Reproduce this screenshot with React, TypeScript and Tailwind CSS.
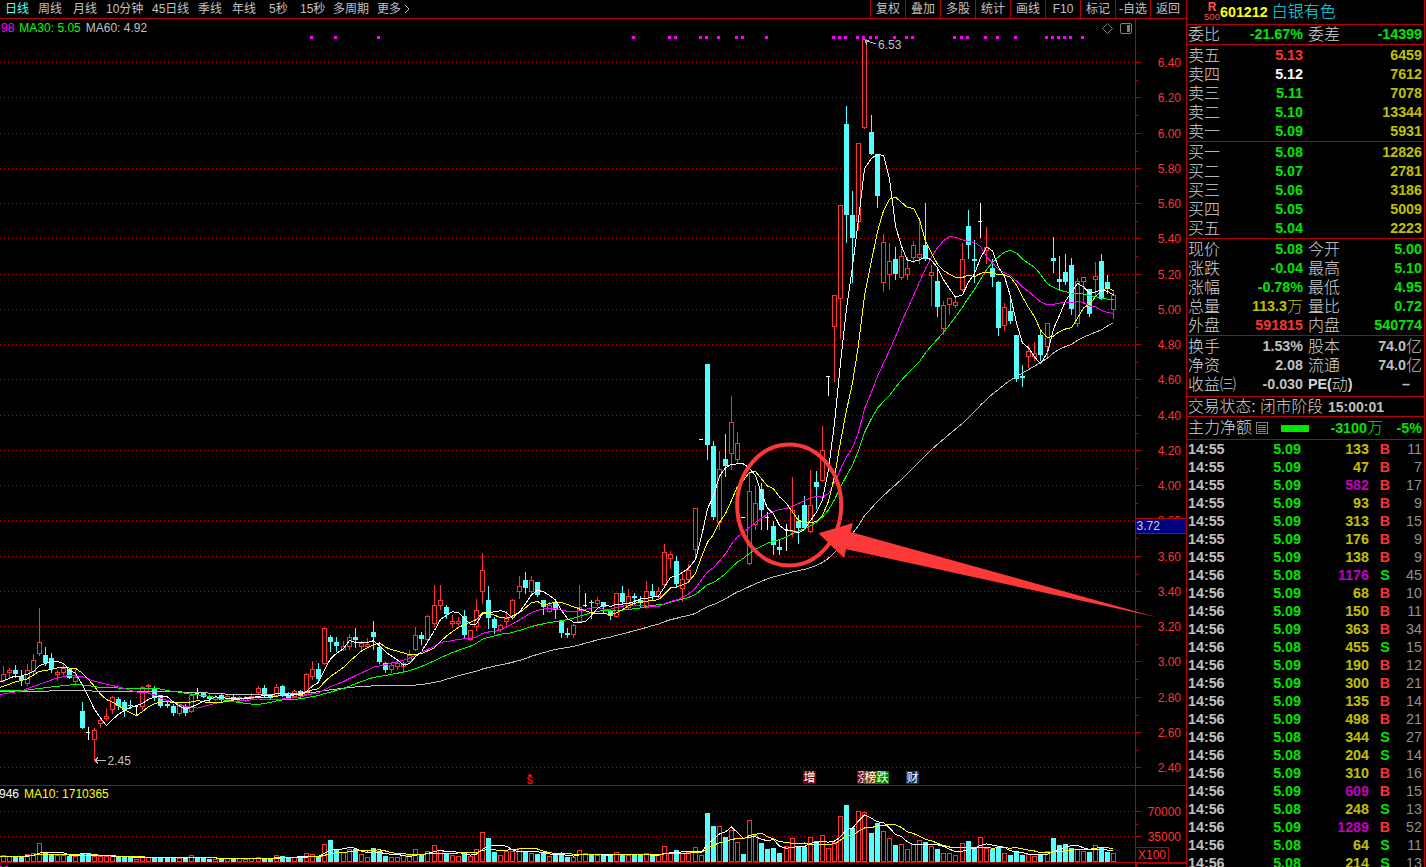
import { clsx } from "clsx";

// [kind, high, top, bottom, low, volumeTop], all on the chart's y scale.
// r = up (hollow), c = down (filled), w = flat day on up volume, c0 = flat day on down volume
type Candle = [string, number, number, number, number, number];

const candles: Candle[] = [
  ["r", 666, 674, 680, 682, 855], ["r", 668, 670, 672, 677, 856], ["c", 665, 670, 674, 677, 856],
  ["c", 670, 676, 680, 685, 857], ["r", 664, 670, 683, 685, 854], ["r", 654, 660, 671, 674, 853],
  ["r", 608, 642, 653, 655, 843], ["c", 647, 655, 663, 665, 853], ["c", 653, 658, 669, 672, 855],
  ["r", 670, 672, 674, 680, 855], ["r", 663, 668, 672, 674, 855], ["c", 668, 669, 678, 678, 856],
  ["r", 670, 677, 681, 683, 856], ["c", 702, 711, 728, 728, 854], ["c0", 727, 732, 732, 739, 854],
  ["r", 728, 730, 739, 760, 856], ["r", 717, 720, 723, 727, 856], ["r", 708, 716, 718, 720, 856],
  ["r", 696, 697, 709, 713, 856], ["c", 697, 699, 706, 709, 857], ["c", 700, 702, 710, 716, 856],
  ["c", 700, 705, 706, 708, 857], ["w", 705, 706, 706, 715, 859], ["r", 686, 687, 706, 709, 857],
  ["r", 684, 685, 686, 692, 857], ["c", 686, 688, 698, 700, 857], ["c", 695, 695, 706, 707, 857],
  ["c", 700, 704, 706, 707, 857], ["c", 704, 706, 713, 715, 858], ["r", 704, 705, 713, 715, 858],
  ["c", 704, 706, 713, 715, 858], ["r", 693, 695, 711, 712, 855], ["c0", 688, 693, 693, 698, 857],
  ["c", 692, 693, 697, 697, 857], ["c", 695, 696, 699, 702, 859], ["r", 695, 697, 699, 700, 859],
  ["c", 694, 695, 700, 701, 858], ["r", 694, 696, 699, 700, 858], ["c", 694, 697, 700, 701, 858],
  ["r", 696, 697, 700, 701, 858], ["r", 696, 698, 700, 701, 859], ["r", 693, 696, 698, 699, 858],
  ["r", 686, 688, 692, 694, 857], ["c", 685, 688, 696, 697, 858], ["c", 694, 695, 698, 699, 858],
  ["r", 684, 687, 695, 696, 855], ["c", 685, 686, 695, 696, 856], ["c", 692, 696, 698, 699, 857],
  ["r", 690, 691, 696, 697, 857], ["c", 690, 691, 696, 697, 857], ["r", 673, 674, 694, 695, 853],
  ["r", 661, 669, 676, 679, 854], ["c", 663, 669, 679, 682, 857], ["r", 628, 628, 663, 664, 844],
  ["c", 635, 637, 642, 651, 840], ["c", 637, 642, 646, 651, 849], ["r", 641, 646, 649, 650, 852],
  ["r", 634, 637, 646, 649, 849], ["c", 628, 637, 640, 647, 849], ["r", 641, 643, 646, 649, 854],
  ["r", 638, 644, 646, 647, 857], ["c", 621, 632, 637, 649, 848], ["c", 644, 647, 662, 663, 851],
  ["c", 662, 663, 670, 672, 856], ["r", 663, 665, 669, 672, 857], ["r", 662, 663, 666, 669, 857],
  ["r", 662, 663, 666, 670, 855], ["r", 650, 655, 661, 662, 855], ["r", 627, 635, 649, 650, 849],
  ["c", 632, 635, 639, 644, 855], ["r", 615, 616, 639, 640, 851], ["r", 585, 605, 623, 626, 845],
  ["r", 585, 600, 605, 609, 850], ["c", 605, 607, 614, 618, 854], ["r", 615, 621, 623, 627, 855],
  ["r", 617, 621, 623, 625, 856], ["c", 610, 616, 635, 637, 852], ["r", 630, 630, 639, 640, 856],
  ["r", 599, 610, 626, 630, 849], ["r", 553, 570, 591, 603, 832], ["c", 586, 600, 618, 628, 838],
  ["c", 617, 619, 628, 633, 852], ["r", 624, 625, 629, 631, 855], ["r", 611, 618, 621, 625, 851],
  ["r", 599, 600, 617, 619, 851], ["r", 576, 586, 591, 598, 848], ["c", 572, 580, 588, 593, 851],
  ["r", 576, 580, 591, 594, 853], ["c", 582, 582, 595, 596, 854], ["c", 600, 600, 607, 614, 853],
  ["r", 602, 605, 611, 612, 856], ["c", 602, 603, 610, 618, 855], ["c", 620, 621, 633, 637, 853],
  ["c", 628, 633, 635, 637, 857], ["r", 624, 625, 634, 637, 857], ["r", 585, 607, 621, 622, 850],
  ["w", 593, 605, 605, 606, 853], ["c", 600, 602, 602, 618, 855], ["r", 597, 600, 603, 605, 855],
  ["c", 602, 602, 607, 613, 855], ["c", 609, 610, 616, 619, 855], ["r", 593, 593, 616, 617, 852],
  ["c", 586, 593, 602, 604, 854], ["r", 589, 596, 607, 609, 855], ["c", 593, 596, 598, 603, 855],
  ["c", 596, 600, 602, 607, 855], ["r", 581, 591, 607, 608, 853], ["c", 584, 591, 596, 600, 855],
  ["r", 587, 591, 596, 598, 855], ["r", 544, 552, 584, 586, 846], ["r", 551, 554, 558, 568, 853],
  ["c", 556, 561, 584, 586, 850], ["r", 574, 579, 588, 601, 853], ["r", 564, 570, 579, 581, 852],
  ["r", 508, 508, 549, 558, 847], ["w", 439, 439, 439, 439, 855], ["c", 364, 364, 445, 459, 813],
  ["c", 441, 446, 517, 519, 826], ["r", 451, 469, 522, 529, 826], ["c", 434, 459, 466, 476, 837],
  ["r", 396, 422, 453, 469, 830], ["r", 432, 443, 459, 463, 842], ["c0", 517, 517, 517, 517, 854],
  ["r", 472, 491, 563, 564, 820], ["r", 486, 503, 524, 529, 835], ["c", 483, 489, 510, 529, 843],
  ["c0", 512, 517, 517, 529, 849], ["c", 521, 526, 545, 554, 848], ["c", 539, 547, 550, 554, 853],
  ["w", 524, 529, 529, 550, 846], ["r", 477, 510, 531, 536, 838], ["c", 515, 521, 528, 543, 846],
  ["c", 496, 505, 528, 529, 847], ["r", 470, 505, 531, 532, 837], ["c", 471, 482, 487, 508, 841],
  ["r", 426, 450, 480, 481, 835], ["w", 376, 376, 376, 395, 848], ["r", 295, 295, 326, 381, 842],
  ["r", 205, 205, 298, 338, 816], ["c", 106, 124, 215, 242, 805], ["c", 191, 215, 238, 282, 828],
  ["r", 143, 143, 221, 229, 811], ["r", 38, 39, 127, 128, 812], ["c", 115, 132, 154, 154, 833],
  ["c", 154, 154, 196, 207, 823], ["r", 234, 242, 282, 291, 831], ["r", 243, 261, 274, 289, 838],
  ["c", 247, 259, 274, 279, 845], ["r", 249, 256, 277, 279, 844], ["r", 257, 268, 274, 279, 849],
  ["r", 241, 245, 257, 262, 844], ["r", 218, 254, 257, 263, 840], ["c", 203, 245, 259, 260, 842],
  ["r", 265, 272, 275, 305, 846], ["c", 268, 281, 307, 316, 849], ["r", 301, 305, 328, 334, 853],
  ["r", 298, 298, 304, 314, 853], ["r", 296, 302, 305, 307, 855], ["r", 243, 259, 289, 290, 843],
  ["c", 210, 226, 245, 258, 841], ["c", 240, 259, 261, 282, 848], ["w", 203, 221, 221, 237, 837],
  ["r", 227, 247, 250, 263, 848], ["c", 259, 268, 277, 286, 849], ["c", 281, 282, 328, 335, 847],
  ["r", 303, 307, 325, 330, 853], ["c", 295, 311, 321, 323, 855], ["c", 335, 335, 379, 381, 851],
  ["c", 365, 376, 378, 386, 855], ["r", 345, 351, 356, 367, 854], ["r", 342, 353, 356, 360, 856],
  ["c", 330, 335, 355, 360, 854], ["r", 323, 323, 346, 358, 851], ["c", 237, 258, 261, 272, 838],
  ["c", 256, 279, 282, 290, 845], ["c", 254, 272, 282, 284, 844], ["c", 258, 265, 309, 314, 848],
  ["r", 278, 281, 323, 326, 849], ["r", 277, 277, 281, 303, 851], ["c", 289, 289, 314, 316, 852],
  ["r", 262, 276, 279, 295, 845], ["c", 254, 261, 299, 299, 848], ["c", 275, 282, 288, 293, 852],
  ["r", 292, 295, 309, 318, 853],
];

const xAt = (i: number) => Math.floor(3.15 + 6.069 * i);

const closes = candles.map(([kind, , top, bottom]) => (kind === "r" ? top : bottom));
const volumes = candles.map((c) => c[5]);

// moving average as polyline points; `lead` covers the days before the first full window
const average = (values: number[], period: number, lead: number[][]) => {
  const points = lead.map(([i, y]) => `${xAt(i)},${y}`);
  for (let i = period - 1; i < values.length; i++) {
    const slice = values.slice(i - period + 1, i + 1);
    const mean = slice.reduce((a, b) => a + b, 0) / period;
    points.push(`${xAt(i) + 0.5},${(mean + 0.5).toFixed(1)}`);
  }
  return points.join(" ");
};

const ma60Lead = [
  [-1, 691.5], [5, 692], [7, 691.2], [10, 690.4], [14, 690.5], [16, 692], [28, 691.7], [33, 692.7],
  [38, 694.5], [45, 694], [49, 693], [51, 692.7], [53, 690.7], [56, 688.3], [58, 687],
];

const ma30Lead = [
  [-1, 690.5], [3, 691], [6, 688.5], [8, 687], [12, 684.5], [14, 685.5], [16, 687.5], [19, 688], [24, 688],
  [26, 689], [28, 691.5],
];

const ma20Lead = [
  [-1, 695], [0, 694], [3, 691], [6, 684.5], [9, 678], [11, 675.5], [13, 676.5], [15, 681], [17, 684], [18, 685.5],
];

const priceLines = [
  { color: "#c0c0c0", points: average(closes, 60, ma60Lead) },
  { color: "#00ff00", points: average(closes, 30, ma30Lead) },
  { color: "#ff00ff", points: average(closes, 20, ma20Lead) },
  { color: "#ffff00", points: average(closes, 10, [[-1, 688], [0, 686.5], [2, 682], [4, 679], [6, 671.5], [8, 669.5]]) },
  { color: "#ffffff", points: average(closes, 5, [[-1, 682], [0, 681], [2, 676], [3, 676]]) },
];

const volumeLines = [
  { color: "#ffffff", points: average(volumes, 5, [[-1, 857], [3, 856.5]]) },
  { color: "#ffff00", points: average(volumes, 10, [[-1, 857], [3, 856.5], [6, 854.5], [8, 854.5]]) },
];

const dotDays = [
  51, 55, 62, 104, 110, 111, 115, 116, 118, 121, 122, 126, 137, 138, 139, 141, 142, 143, 144, 147, 149, 150,
  157, 158, 159, 162, 164, 167, 172, 173, 174, 175, 176, 178,
];

const levels = Array.from({ length: 21 }, (_, k) => ({
  y: 62 + Math.round(k * 35.26),
  label: (6.4 - k * 0.2).toFixed(2),
}));

const badges = [
  { x: 803, text: "增", fill: "#800000" },
  { x: 857, text: "涨", fill: "#800000" },
  { x: 864, text: "榜", fill: "#804000" },
  { x: 876, text: "跌", fill: "#008000" },
  { x: 906, text: "财", fill: "#003870" },
];

const Chart = () => (
  <svg
    viewBox="0 19 1187 848"
    width="1187"
    height="848"
    className="absolute inset-0 font-['Liberation_Sans','Noto_Sans_CJK_SC',sans-serif] text-[12px]"
    shapeRendering="crispEdges"
  >
    {/* grid */}
    {[...levels.map((l) => l.y), 811, 836].map((y) => (
      <line key={y} x1="0" x2="1135" y1={y + 0.5} y2={y + 0.5} stroke="#b40000" strokeDasharray="1 3" />
    ))}

    {/* volume */}
    {candles.map(([kind, , , , , top], i) => {
      const x = xAt(i);
      return kind === "r" || kind === "w" ? (
        <rect key={i} x={x - 1.5} y={top + 0.5} width="4" height={861 - top} fill="black" stroke="#ff3232" />
      ) : (
        <rect key={i} x={x - 2} y={top} width="5" height={862 - top} fill="#54ffff" />
      );
    })}

    {/* candles */}
    {candles.map(([kind, high, top, bottom, low], i) => {
      const x = xAt(i);
      if (kind === "w" || kind === "c0") {
        return (
          <g key={i} fill="white">
            <rect x={x} y={high} width="1" height={low - high + 1} />
            <rect x={x - 2} y={top} width="4" height="1" />
          </g>
        );
      }
      if (kind === "c") {
        return (
          <g key={i} fill="#54ffff">
            <rect x={x} y={high} width="1" height={low - high + 1} />
            <rect x={x - 2} y={top} width="5" height={Math.max(1, bottom - top)} />
          </g>
        );
      }
      return (
        <g key={i} fill="#ff3232">
          <rect x={x} y={high} width="1" height={low - high + 1} />
          <rect x={x - 1.5} y={top + 0.5} width="4" height={Math.max(1, bottom - top)} fill="black" stroke="#ff3232" />
        </g>
      );
    })}

    {[...priceLines, ...volumeLines].map((line, i) => (
      <polyline key={i} points={line.points} fill="none" stroke={line.color} />
    ))}

    {dotDays.map((d) => (
      <rect key={d} x={xAt(d) - 2} y="36" width="3" height="3" fill="#ff00ff" />
    ))}
    <rect x="0" y="866" width="2" height="1" fill="#ff00ff" />
    <rect x="5" y="866" width="3" height="1" fill="#ff00ff" />

    {/* high / low markers */}
    <g stroke="#c0c0c0" fill="none">
      <path d="M865 40.5L876 44M865 40.5h4M865 40.5l2 4" />
      <path d="M95 760.5h11M95 760.5l3-3M95 760.5l3 3" />
    </g>
    <text x="878" y="49" fill="#c0c0c0">6.53</text>
    <text x="107.5" y="765" fill="#c0c0c0">2.45</text>

    {badges.map((b) => (
      <g key={b.x}>
        <rect x={b.x} y="771" width="13" height="13" fill={b.fill} />
        <text x={b.x + 0.5} y="782" fill="white">{b.text}</text>
      </g>
    ))}
    <path d="M527.5 776L530 773l2.5 3z" fill="#ff0000" />
    <text x="526.5" y="784" fill="#ff0000" fontSize="10" fontWeight="bold">S</text>

    {/* frame and axis */}
    <g stroke="#b40000">
      <path d="M1135.5 19v848M1186.5 0v867M0 785.5h1187M0 862.5h1187" />
      <path d="M1135 863.5h52M1136.5 862v5" />
      {[...levels.map((l) => l.y), 811, 836].map((y) => (
        <line key={y} x1="1135" x2="1141" y1={y + 0.5} y2={y + 0.5} />
      ))}
      {[...levels.map((l) => l.y + 18), 824].map((y) => (
        <line key={y} x1="1135" x2="1138" y1={y + 0.5} y2={y + 0.5} />
      ))}
      <path d="M1135 847.5h33.5v15" fill="none" />
    </g>
    <g fill="#ff3232" textAnchor="end">
      {levels.map((l) => (
        <text key={l.y} x="1181" y={l.y + 5}>{l.label}</text>
      ))}
      <text x="1181" y="816">70000</text>
      <text x="1181" y="841">35000</text>
      <text x="1166" y="859">X100</text>
    </g>
    <rect x="1135.5" y="518.5" width="51" height="15" fill="#000080" stroke="#b40000" />
    <text x="1136.5" y="530" fill="#d0d0d0">3.72</text>

    {/* toolbar glyphs */}
    <g fill="none" stroke="#808080" shapeRendering="auto">
      <path d="M1107.5 23.5l5 5-5 5-5-5z" />
      <rect x="1120.5" y="23.5" width="11" height="10" rx="1.5" />
      <rect x="1127" y="25" width="3" height="7" fill="#808080" stroke="none" />
    </g>

    {/* annotation */}
    <g shapeRendering="auto">
      <ellipse cx="789.2" cy="505" rx="52" ry="60.5" fill="none" stroke="#fc3838" strokeWidth="4" />
      <path d="M818.5 533.3L853 523l-2.3 9L1156 617 846.3 549.3l-2.3 8.7z" fill="#fc3838" />
    </g>
  </svg>
);

const periods = [
  { label: "日线", cell: "w-[33px] text-[#54ffff]" },
  { label: "周线", cell: "w-[35px]" },
  { label: "月线", cell: "w-[33px]" },
  { label: "10分钟", cell: "w-[46px]" },
  { label: "45日线", cell: "w-[46px]" },
  { label: "季线", cell: "w-[34px]" },
  { label: "年线", cell: "w-[37px]" },
  { label: "5秒", cell: "w-[31px]" },
  { label: "15秒", cell: "w-[33px]" },
  { label: "多周期", cell: "w-[44px]" },
  { label: "更多", cell: "w-[27px]" },
];

const actions = ["复权", "叠加", "多股", "统计", "画线", "F10", "标记", "-自选", "返回"];

const GREEN = "text-[#00e600]";
const RED = "text-[#ff3232]";
const GOLD = "text-[#c0c000]";
const GRAY = "text-[#c0c0c0]";

const asks = [
  ["卖五", "5.13", "6459", RED],
  ["卖四", "5.12", "7612", "text-white"],
  ["卖三", "5.11", "7078", GREEN],
  ["卖二", "5.10", "13344", GREEN],
  ["卖一", "5.09", "5931", GREEN],
];

const bids = [
  ["买一", "5.08", "12826", GREEN],
  ["买二", "5.07", "2781", GREEN],
  ["买三", "5.06", "3186", GREEN],
  ["买四", "5.05", "5009", GREEN],
  ["买五", "5.04", "2223", GREEN],
];

const quotes = [
  ["现价", "5.08", GREEN, "今开", "5.00", GREEN],
  ["涨跌", "-0.04", GREEN, "最高", "5.10", GREEN],
  ["涨幅", "-0.78%", GREEN, "最低", "4.95", GREEN],
  ["总量", "113.3万", GOLD, "量比", "0.72", GREEN],
  ["外盘", "591815", RED, "内盘", "540774", GREEN],
];

const basics = [
  ["换手", "1.53%", GRAY, "股本", "74.0亿", GRAY],
  ["净资", "2.08", GRAY, "流通", "74.0亿", GRAY],
  ["收益㈢", "-0.030", GRAY, "PE(动)", "–", "text-[#c0c0c0] pr-[12px]"],
];

const ticks = [
  ["14:55", "5.09", "133", "B", "11"],
  ["14:55", "5.09", "47", "B", "7"],
  ["14:55", "5.09", "582", "B", "17"],
  ["14:55", "5.09", "93", "B", "9"],
  ["14:55", "5.09", "313", "B", "15"],
  ["14:55", "5.09", "176", "B", "9"],
  ["14:55", "5.09", "138", "B", "9"],
  ["14:56", "5.08", "1176", "S", "45"],
  ["14:56", "5.09", "68", "B", "10"],
  ["14:56", "5.09", "150", "B", "11"],
  ["14:56", "5.09", "363", "B", "34"],
  ["14:56", "5.08", "455", "S", "15"],
  ["14:56", "5.09", "190", "B", "12"],
  ["14:56", "5.09", "300", "B", "21"],
  ["14:56", "5.09", "135", "B", "14"],
  ["14:56", "5.09", "498", "B", "21"],
  ["14:56", "5.08", "344", "S", "27"],
  ["14:56", "5.08", "204", "S", "14"],
  ["14:56", "5.09", "310", "B", "16"],
  ["14:56", "5.09", "609", "B", "15"],
  ["14:56", "5.08", "248", "S", "13"],
  ["14:56", "5.09", "1289", "B", "52"],
  ["14:56", "5.08", "64", "S", "11"],
  ["14:56", "5.08", "214", "S", "13"],
];

// trades above this size are highlighted
const BIG_TRADE = 500;

// latin digits are bold, the CJK characters next to them stay thin
const Mixed = ({ text }: { text: string }) => (
  <span className="inline-flex items-center">
    {text.split(/([\u3200-\u9fff]+)/).filter(Boolean).map((part, i) => (
      <span key={i} className={/[\u3200-\u9fff]/.test(part) ? "text-[16px] font-light" : "font-bold"}>
        {part}
      </span>
    ))}
  </span>
);

const Depth = ({ rows }: { rows: string[][] }) => (
  <div className="h-[97px] border-b border-[#b40000] pt-px">
    {rows.map(([label, price, amount, color]) => (
      <div key={label} className="flex h-[19px] items-center">
        <span className="w-[50px] text-[16px] font-light text-[#d4d4d4]">{label}</span>
        <span className={clsx("w-[65px] text-right font-bold", color)}>{price}</span>
        <span className="flex-1 text-right font-bold text-[#c0c000]">{amount}</span>
      </div>
    ))}
  </div>
);

const Pairs = ({ rows }: { rows: string[][] }) => (
  <>
    {rows.map(([a, av, ac, b, bv, bc]) => (
      <div key={a} className="flex h-[19px] items-center">
        <span className="w-[50px] text-[16px] font-light text-[#d4d4d4]">{a}</span>
        <span className={clsx("flex w-[65px] justify-end", ac)}><Mixed text={av} /></span>
        <span className="flex w-[45px] pl-[5px] text-[#d4d4d4]"><Mixed text={b} /></span>
        <span className={clsx("flex flex-1 justify-end", bc)}><Mixed text={bv} /></span>
      </div>
    ))}
  </>
);

const QuotePanel = () => (
  <aside className="flex h-[867px] w-[238px] shrink-0 flex-col overflow-hidden whitespace-nowrap border-r border-[#b40000] text-[14.3px] leading-none text-[#c0c0c0] *:shrink-0 *:pl-px *:pr-[2px]">
    <div className="flex h-[25px] items-center border-b border-[#b40000]">
      <div className="ml-[16px] flex w-[16px] flex-col items-center text-[#ff5050]">
        <span className="h-[10px] text-[12px] font-bold leading-[10px]">R</span>
        <span className="h-[10px] text-[9.5px] leading-[10px]">500</span>
      </div>
      <span className="font-bold text-[#ffff00]">601212</span>
      <span className="ml-[4px] text-[16px] font-light text-[#00e0f0]">白银有色</span>
    </div>
    <div className="h-5 border-b border-[#b40000]">
      <Pairs rows={[["委比", "-21.67%", GREEN, "委差", "-14399", GREEN]]} />
    </div>
    <Depth rows={asks} />
    <Depth rows={bids} />
    <div className="h-[97px] border-b border-[#b40000] pt-px">
      <Pairs rows={quotes} />
    </div>
    <div className="h-[61px] border-b border-[#b40000] pt-px">
      <Pairs rows={basics} />
    </div>
    <div className="flex h-5 items-center border-b border-[#b40000]">
      <span className="w-[140px] text-[15.8px] font-light text-[#d4d4d4]">交易状态: 闭市阶段</span>
      <span className="text-[14px] font-bold">15:00:01</span>
    </div>
    <div className="flex h-[23px] items-center border-b border-[#b40000]">
      <span className="w-[68px] text-[16px] font-light text-[#d4d4d4]">主力净额</span>
      <svg width="12" height="12" viewBox="0 0 12 12" fill="none" stroke="#808080" shapeRendering="crispEdges">
        <rect x=".5" y=".5" width="11" height="11" />
        <path d="M2 3.5h8M2 5.5h8M2 7.5h8M2 9.5h8" />
      </svg>
      <span className="ml-[13px] h-[7px] w-7 bg-[#00e600]" />
      <span className="flex w-[74px] justify-end text-[#00e600]"><Mixed text="-3100万" /></span>
      <span className="flex-1 text-right font-bold text-[#00e600]">-5%</span>
    </div>
    <div>
      {ticks.map(([time, price, amount, side, count], i) => (
        <div key={i} className="flex h-[18px] items-center font-bold">
          <span className="w-[50px]">{time}</span>
          <span className="w-[63px] text-right text-[#00e600]">{price}</span>
          <span className={clsx("w-[68px] text-right", Number(amount) > BIG_TRADE ? "text-[#c000c0]" : GOLD)}>
            {amount}
          </span>
          <span className={clsx("w-[32px] text-center", side === "B" ? RED : GREEN)}>{side}</span>
          <span className="flex-1 text-right font-normal text-[#909090]">{count}</span>
        </div>
      ))}
    </div>
  </aside>
);

export default function App() {
  return (
    <div className="flex h-[867px] w-[1426px] overflow-hidden bg-black font-['Liberation_Sans','Noto_Sans_CJK_SC',sans-serif] text-[#c0c0c0]">
      <main className="flex w-[1187px] shrink-0 flex-col">
        <header className="flex h-[19px] items-center whitespace-nowrap border-b border-[#b40000] text-[12px] leading-none">
          <nav className="flex flex-1 items-center pl-[5px]">
            {periods.map((p) => (
              <span key={p.label} className={clsx("shrink-0", p.cell)}>{p.label}</span>
            ))}
            <svg width="6" height="10" viewBox="0 0 6 10" fill="none" stroke="#c0c0c0">
              <path d="M1 1l4 4-4 4" />
            </svg>
          </nav>
          {actions.map((a) => (
            <span key={a} className="flex h-[18px] w-[35px] shrink-0 items-center justify-center border-l border-[#b40000]">
              {a}
            </span>
          ))}
          <span className="h-[18px] w-0.5 border-r border-[#b40000]" />
        </header>

        <div className="relative h-[848px]">
          <Chart />
          <div className="relative flex h-[767px] gap-[5px] pl-px pt-[3px] text-[12px] leading-[13px]">
            <span className="text-[#ff00ff]">98</span>
            <span className="text-[#00ff00]">MA30: 5.05</span>
            <span>MA60: 4.92</span>
          </div>
          <div className="relative -ml-px flex gap-[5px] pt-[2px] text-[12px] leading-[13px]">
            <span className="text-white">946</span>
            <span className="text-[#ffff00]">MA10: 1710365</span>
          </div>
        </div>
      </main>
      <QuotePanel />
    </div>
  );
}
